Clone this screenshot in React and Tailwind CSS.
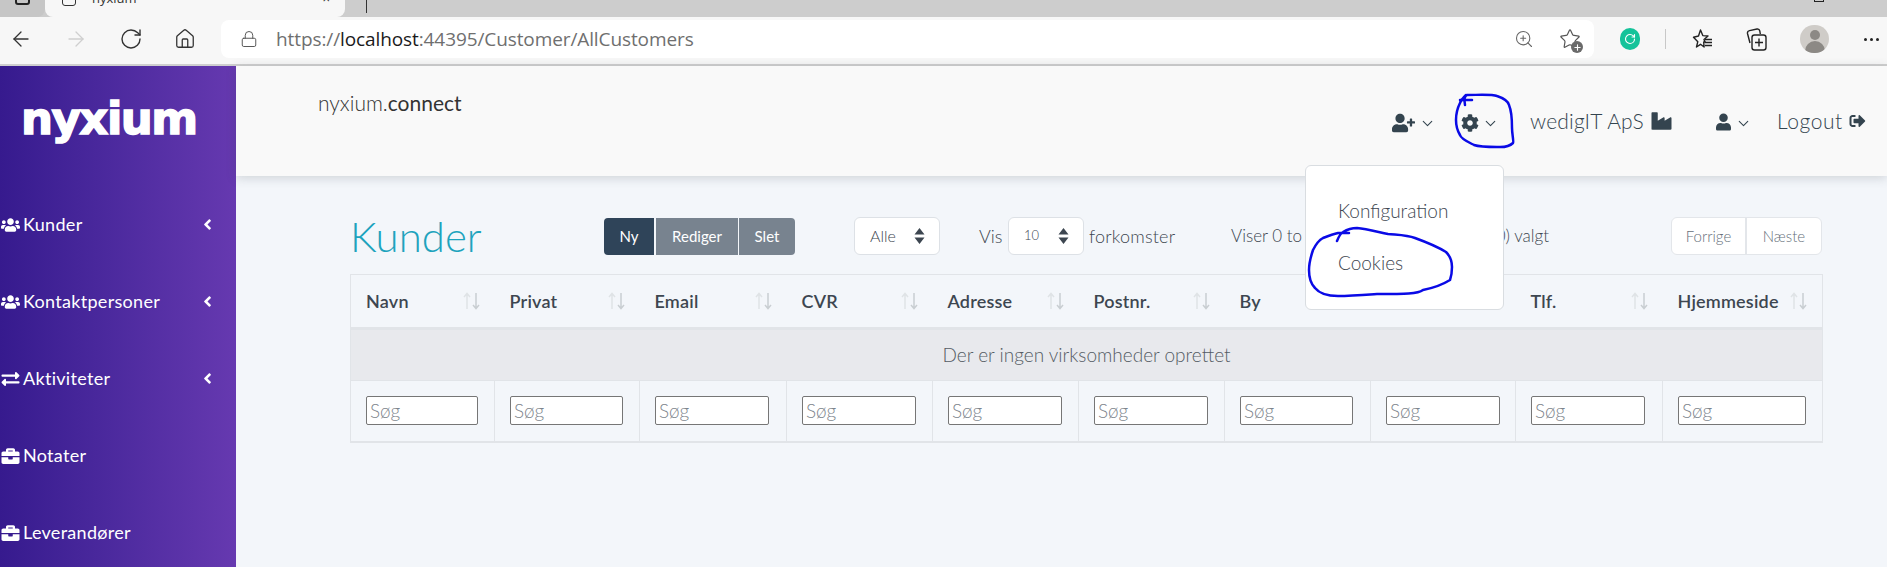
import { ArrowLeft, ArrowRight, RotateCw, Home, Lock, ZoomIn, ChevronDown, Plus, Star } from "lucide-react";
import { FaUsers, FaExchangeAlt, FaBriefcase, FaAngleLeft, FaUserPlus, FaCog, FaIndustry, FaUser, FaSignOutAlt } from "react-icons/fa";

const navItems = [
  { icon: FaUsers, label: "Kunder", caret: true },
  { icon: FaUsers, label: "Kontaktpersoner", caret: true },
  { icon: FaExchangeAlt, label: "Aktiviteter", caret: true },
  { icon: FaBriefcase, label: "Notater" },
  { icon: FaBriefcase, label: "Leverandører" },
];

const columns = [
  { label: "Navn", col: "w-[144px]", input: "w-[112px]" },
  { label: "Privat", col: "w-[145px]", input: "w-[113px]" },
  { label: "Email", col: "w-[147px]", input: "w-[114px]" },
  { label: "CVR", col: "w-[146px]", input: "w-[114px]" },
  { label: "Adresse", col: "w-[146px]", input: "w-[114px]" },
  { label: "Postnr.", col: "w-[146px]", input: "w-[114px]" },
  { label: "By", col: "w-[146px]", input: "w-[113px]" },
  { label: "", col: "w-[145px]", input: "w-[114px]" },
  { label: "Tlf.", col: "w-[147px]", input: "w-[114px]" },
  { label: "Hjemmeside", col: "w-[160px]", input: "w-[128px]" },
];

function SortArrows() {
  return (
    <svg width="17" height="18" viewBox="0 0 17 18" fill="none" className="shrink-0">
      <path d="M4 17V2M1 5l3-3.500 3 3.500" stroke="#dfe3e6" strokeWidth="1.500" />
      <path d="M13 1v15M10 13l3 3.500 3-3.500" stroke="#c9ced2" strokeWidth="1.500" />
    </svg>
  );
}

function SelectArrows() {
  return (
    <svg width="11" height="16" viewBox="0 0 11 16" className="shrink-0">
      <path d="M5.500 0L10.500 6.500H.5zM5.500 16L.5 9.500H10.500z" fill="#3d4650" />
    </svg>
  );
}

function FavoritesIcon() {
  return (
    <svg width="22" height="22" viewBox="0 0 22 22" fill="none" stroke="#222" strokeWidth="1.400" strokeLinejoin="round">
      <path d="M9.500 2l2.300 5.600 5.200.4-4 3.600 1.200 2.400-1.500 0 .4 5-3.600-2.700-4 2.700 1.300-5.300L2.500 9.200 7.500 8z" />
      <path d="M14 11.500h7M14 14.500h7M14 17.500h7" />
    </svg>
  );
}

function CollectionsIcon() {
  return (
    <svg width="21" height="23" viewBox="0 0 21 23" fill="none" stroke="#222" strokeWidth="1.400">
      <path d="M4 15L1.500 5.500C1.200 4 2 3 3.500 2.600L11 1c1.500-.2 2.500.6 2.800 2l.5 3" />
      <rect x="6" y="7" width="14" height="15" rx="2.500" />
      <path d="M13 10.500v8M9 14.500h8" />
    </svg>
  );
}

function BrowserBar() {
  return (
    <div className="shrink-0">
      <div className="flex h-[17px] overflow-hidden bg-[#cdcdcd]">
        <div className="flex w-[45px] justify-center rounded-br-lg bg-[#c6c6c6]">
          <div className="mt-[-10px] h-[15px] w-[15px] rounded-[3px] border-2 border-[#222]" />
        </div>
        <div className="flex w-[300px] items-end rounded-b-lg bg-[#f7f7f7] pl-[17px]">
          <div className="mb-[11px] h-[16px] w-[14px] rounded-[3px] border border-[#333]" />
          <span className="mb-[12px] ml-[16px] font-['Open_Sans',sans-serif] text-[13px] leading-none text-[#333]">nyxium</span>
          <span className="mb-[12px] ml-auto mr-[15px] text-[13px] leading-none text-[#333]">×</span>
        </div>
        <div className="ml-[21px] h-[13px] w-px bg-[#333]" />
        <div className="ml-auto mr-[63px] mt-[-8px] h-[10px] w-[10px] border border-[#222]" />
      </div>
      <div className="flex h-[47px] items-center bg-[#f7f7f7] pb-[3px]">
        <ArrowLeft className="ml-[9px] h-[24px] w-[24px] text-[#333]" strokeWidth={1.3} />
        <ArrowRight className="ml-[31px] h-[24px] w-[24px] text-[#cfcfcf]" strokeWidth={1.3} />
        <RotateCw className="ml-[31px] h-[24px] w-[24px] text-[#333]" strokeWidth={1.4} />
        <Home className="ml-[31px] h-[22px] w-[22px] text-[#333]" strokeWidth={1.4} />
        <div className="ml-[25px] flex h-[38px] w-[1373px] items-center rounded-lg bg-white pl-[19px]">
          <Lock className="h-[18px] w-[18px] text-[#555]" strokeWidth={1.3} />
          <span className="ml-[18px] font-['Open_Sans',sans-serif] text-[19px] tracking-[-0.1px] text-[#6f6f6f]">
            https://<span className="text-[#1a1a1a]">localhost</span>:44395/Customer/AllCustomers
          </span>
          <ZoomIn className="ml-auto h-[20px] w-[20px] text-[#666]" strokeWidth={1.3} />
          <div className="relative ml-[25px] mr-[13px]">
            <Star className="h-[22px] w-[22px] text-[#555]" strokeWidth={1.3} />
            <span className="absolute bottom-[-3px] right-[-2px] flex h-[12px] w-[12px] items-center justify-center rounded-full bg-[#6a6a6a]">
              <Plus className="h-[9px] w-[9px] text-white" strokeWidth={3} />
            </span>
          </div>
        </div>
        <span className="ml-[26px] flex h-[22px] w-[20px] items-center justify-center rounded-full bg-[#15c39a]">
          <RotateCw className="h-[12px] w-[12px] text-white" strokeWidth={2.2} />
        </span>
        <div className="ml-[25px] h-[20px] w-px bg-[#c8c8c8]" />
        <div className="ml-[25px]">
          <FavoritesIcon />
        </div>
        <div className="ml-[33px]">
          <CollectionsIcon />
        </div>
        <div className="ml-[33px] flex h-[28px] w-[29px] flex-col items-center overflow-hidden rounded-full bg-[#cfccc8] pt-[5px]">
          <div className="h-[11px] w-[10px] rounded-full bg-[#8c8985]" />
          <div className="mt-[1px] h-[14px] w-[20px] rounded-t-full bg-[#8c8985]" />
        </div>
        <div className="ml-[35px] flex gap-[3px]">
          <span className="h-[3px] w-[3px] rounded-full bg-[#222]" />
          <span className="h-[3px] w-[3px] rounded-full bg-[#222]" />
          <span className="h-[3px] w-[3px] rounded-full bg-[#222]" />
        </div>
      </div>
      <div className="h-[2px] bg-[#cfcfcf]" />
    </div>
  );
}

function Sidebar() {
  return (
    <aside className="w-[236px] shrink-0 bg-gradient-to-r from-[#361a8e] to-[#6639b0]">
      <div className="flex h-[120px] items-start pl-[21px] pt-[30px]">
        <span className="font-['DejaVu_Sans',sans-serif] text-[45px] font-bold leading-none tracking-[-1.5px] text-white [-webkit-text-stroke:1.5px_white]">nyxium</span>
      </div>
      <nav>
        {navItems.map(({ icon: Icon, label, caret }) => (
          <div key={label} className="flex h-[77px] items-center pl-[1px] pr-[23px] text-white">
            <Icon className="h-[18px] w-[19px] shrink-0" />
            <span className="ml-[3px] text-[18px] tracking-[0.3px]">{label}</span>
            {caret && <FaAngleLeft className="ml-auto h-[17px] w-[11px]" />}
          </div>
        ))}
      </nav>
    </aside>
  );
}

function TopHeader() {
  return (
    <header className="relative z-10 flex h-[110px] shrink-0 bg-[#f9f9f9] pl-[82px] shadow-[0_2px_10px_rgba(60,70,80,0.2)]">
      <p className="mt-[24px] text-[21px] leading-[26px] font-light text-[#333]">
        nyxium.<span className="font-normal">connect</span>
      </p>
      <div className="ml-auto flex items-start pr-[21px] pt-[45px] text-[#34444f]">
        <FaUserPlus className="mt-[2px] h-[20px] w-[23px]" />
        <ChevronDown className="ml-[4px] mt-[4px] h-[17px] w-[17px]" strokeWidth={1.5} />
        <FaCog className="ml-[25px] mt-[3px] h-[18px] w-[18px]" />
        <ChevronDown className="ml-[3px] mt-[4px] h-[17px] w-[17px]" strokeWidth={1.5} />
        <span className="ml-[31px] w-[115px] whitespace-nowrap text-[21px] font-light leading-[20px] tracking-[0.2px]">wedigIT ApS</span>
        <FaIndustry className="ml-[6px] h-[20px] w-[21px]" />
        <FaUser className="ml-[44px] mt-[2px] h-[18px] w-[15px]" />
        <ChevronDown className="ml-[4px] mt-[4px] h-[17px] w-[17px]" strokeWidth={1.5} />
        <span className="ml-[25px] w-[64px] whitespace-nowrap text-[21px] font-light leading-[20px] tracking-[0.6px]">Logout</span>
        <FaSignOutAlt className="ml-[8px] mt-[2px] h-[16px] w-[17px]" />
      </div>
    </header>
  );
}

function Toolbar() {
  return (
    <div className="flex h-[38px] items-center text-[#3d4650]">
      <h1 className="w-[254px] text-[42px] font-light leading-none text-[#1ea3bd]">Kunder</h1>
      <div className="flex gap-[2px] text-[15px] text-white">
        <button className="flex h-[37px] w-[50px] items-center justify-center rounded-l bg-[#2f4459]">Ny</button>
        <div className="flex gap-px">
          <button className="flex h-[37px] w-[82px] items-center justify-center bg-[#78838f]">Rediger</button>
          <button className="flex h-[37px] w-[56px] items-center justify-center rounded-r bg-[#78838f]">Slet</button>
        </div>
      </div>
      <div className="ml-[59px] flex h-[38px] w-[86px] items-center justify-between rounded-md border border-[#dde1e6] bg-white pl-[15px] pr-[14px] text-[16px] font-light">
        Alle
        <SelectArrows />
      </div>
      <span className="ml-[39px] w-[24px] text-[18px] font-light">Vis</span>
      <div className="ml-[5px] flex h-[38px] w-[76px] items-center justify-between rounded-md border border-[#dde1e6] bg-white pl-[15px] pr-[14px] text-[13px] font-light">
        10
        <SelectArrows />
      </div>
      <span className="ml-[5px] w-[89px] whitespace-nowrap text-[18px] font-light tracking-[0.2px]">forkomster</span>
      <div className="ml-[53px] flex w-[318px] justify-between whitespace-nowrap text-[17px] font-light">
        <span>Viser 0 to 0 af 0</span>
        <span>(0) valgt</span>
      </div>
      <div className="ml-auto flex h-[38px] rounded-md border border-[#e3e6ea] bg-white text-[15px] font-light text-[#66707a]">
        <span className="flex w-[75px] items-center justify-center border-r-2 border-[#e3e6ea]">Forrige</span>
        <span className="flex w-[74px] items-center justify-center">Næste</span>
      </div>
    </div>
  );
}

function CustomerTable() {
  return (
    <table className="mt-[19px] w-[1472px] table-fixed border-collapse text-[#3d4650]">
      <colgroup>
        {columns.map((c, i) => (
          <col key={i} className={c.col} />
        ))}
      </colgroup>
      <thead>
        <tr className="h-[54px] border-x border-t border-b-[3px] border-[#e1e4e8]">
          {columns.map((c, i) => (
            <th key={i} className="px-[15px] text-left text-[18px] font-semibold tracking-[0.2px]">
              <div className="flex items-center justify-between">
                <span>{c.label}</span>
                <SortArrows />
              </div>
            </th>
          ))}
        </tr>
      </thead>
      <tbody>
        <tr className="h-[52px] border-x border-b border-[#e1e4e8] bg-[#e8e9ed]">
          <td colSpan={10} className="text-center text-[19px] font-light text-[#555c64]">
            Der er ingen virksomheder oprettet
          </td>
        </tr>
        <tr className="h-[61px] border-x border-b-2 border-[#e1e4e8]">
          {columns.map((c, i) => (
            <td key={i} className="border-r border-[#e1e4e8] px-[15px]">
              <input
                placeholder="Søg"
                className={`${c.input} block h-[29px] rounded-[2px] border border-[#767676] bg-white px-[3px] text-[19px] font-light placeholder:text-[#7d848c]`}
              />
            </td>
          ))}
        </tr>
      </tbody>
    </table>
  );
}

export default function App() {
  return (
    <div className="relative flex h-[567px] w-[1887px] flex-col overflow-hidden font-['Lato',sans-serif]">
      <BrowserBar />
      <div className="flex min-h-0 flex-1">
        <Sidebar />
        <div className="flex min-w-0 flex-1 flex-col bg-[#f3f6fa]">
          <TopHeader />
          <main className="w-[1586px] pl-[114px] pt-[41px]">
            <Toolbar />
            <CustomerTable />
          </main>
        </div>
      </div>

      {/* settings dropdown */}
      <div className="absolute left-[1305px] top-[165px] z-20 flex h-[145px] w-[199px] flex-col rounded-md border border-[#d9dde1] bg-white pl-[32px] pt-[33px] text-[19px] font-light text-[#3d4650]">
        <span className="h-[52px] leading-[24px]">Konfiguration</span>
        <span className="leading-[24px]">Cookies</span>
      </div>

      {/* pen annotations on the screenshot */}
      <svg className="pointer-events-none absolute left-0 top-0 z-30" width="1887" height="567" fill="none" stroke="#0a0ae6" strokeWidth="2.500" strokeLinecap="round" strokeLinejoin="round">
        <path d="M1465 105C1464 100 1465 96 1467 95C1478 95 1492 94 1497 96C1503 98 1508 101 1509 105C1512 112 1512 122 1512 128C1512 134 1514 142 1513 143C1508 148 1502 147 1497 147C1488 147 1480 147 1474 145C1468 142 1461 139 1460 135C1457 130 1456 125 1456 120C1456 114 1458 107 1460 103C1461 100 1464 97 1466 95" />
        <path d="M1460 100H1472" />
        <path d="M1337 241C1339 236 1341 233 1343 232C1348 229 1352 228 1357 228C1367 229 1378 232 1388 234C1398 235 1407 235 1415 238C1426 242 1438 247 1446 252C1451 257 1452 262 1452 267C1452 272 1451 277 1450 280C1442 285 1433 288 1423 290C1418 294 1405 294 1377 294C1363 295 1350 296 1338 296C1327 296 1319 293 1315 288C1310 283 1309 276 1309 270C1309 262 1311 256 1313 250C1316 244 1319 240 1323 238C1328 236 1333 234 1338 233H1349" />
      </svg>
    </div>
  );
}
